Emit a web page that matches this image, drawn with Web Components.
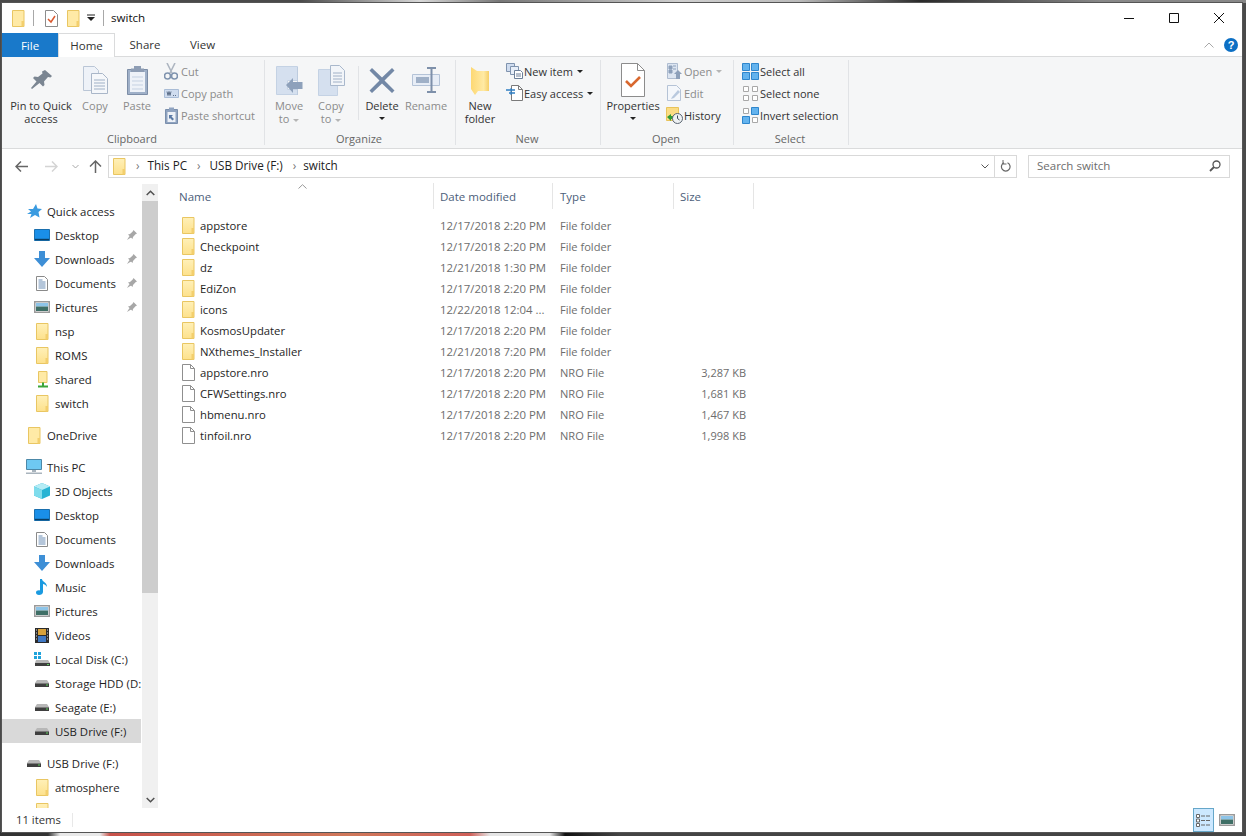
<!DOCTYPE html>
<html>
<head>
<meta charset="utf-8">
<title>switch</title>
<style>
  html, body { margin: 0; height: 100%; overflow: hidden; background: #444; }
  body { font: 12px "Open Sans", "Noto Sans", sans-serif; }
</style>
</head>
<body>
<explorer-window>
  <title-bar title-text="switch"></title-bar>
  <ribbon-tabs></ribbon-tabs>
  <ribbon-panel>
    <rb-group label="Clipboard" style="--w:262px;--pad:6px">
      <rb-large style="--w:66px"><win-icon name="pin" slot="icon"></win-icon>Pin to Quick<br>access</rb-large>
      <rb-large style="--w:42px" disabled><win-icon name="copy" slot="icon"></win-icon>Copy</rb-large>
      <rb-large style="--w:42px" disabled><win-icon name="paste" slot="icon"></win-icon>Paste</rb-large>
      <rb-stack style="--x:3px">
        <rb-small disabled><win-icon name="cut" slot="icon"></win-icon>Cut</rb-small>
        <rb-small disabled><win-icon name="copypath" slot="icon"></win-icon>Copy path</rb-small>
        <rb-small disabled><win-icon name="pasteshortcut" slot="icon"></win-icon>Paste shortcut</rb-small>
      </rb-stack>
    </rb-group>
    <rb-group label="Organize" style="--w:190px;--pad:2px">
      <rb-large style="--w:44px" disabled><win-icon name="moveto" slot="icon"></win-icon>Move<br>to <rb-caret></rb-caret></rb-large>
      <rb-large style="--w:40px" disabled><win-icon name="copyto" slot="icon"></win-icon>Copy<br>to <rb-caret></rb-caret></rb-large>
      <rb-sep></rb-sep>
      <rb-large style="--w:42px" arrow><win-icon name="delete" slot="icon"></win-icon>Delete</rb-large>
      <rb-large style="--w:44px;margin-left:1px" disabled><win-icon name="rename" slot="icon"></win-icon>Rename</rb-large>
    </rb-group>
    <rb-group label="New" style="--w:144px;--pad:0px">
      <rb-large style="--w:48px"><win-icon name="bigfolder" slot="icon"></win-icon>New<br>folder</rb-large>
      <rb-stack>
        <rb-small arrow><win-icon name="newitem" slot="icon"></win-icon>New item</rb-small>
        <rb-small arrow><win-icon name="easyaccess" slot="icon"></win-icon>Easy access</rb-small>
      </rb-stack>
    </rb-group>
    <rb-group label="Open" style="--w:132px;--pad:1px">
      <rb-large style="--w:62px" arrow><win-icon name="properties" slot="icon"></win-icon>Properties</rb-large>
      <rb-stack>
        <rb-small disabled arrow-light><win-icon name="open" slot="icon"></win-icon>Open</rb-small>
        <rb-small disabled><win-icon name="edit" slot="icon"></win-icon>Edit</rb-small>
        <rb-small><win-icon name="history" slot="icon"></win-icon>History</rb-small>
      </rb-stack>
    </rb-group>
    <rb-group label="Select" style="--w:114px;--pad:0px">
      <rb-stack style="--x:6px">
        <rb-small><win-icon name="selectall" slot="icon"></win-icon>Select all</rb-small>
        <rb-small><win-icon name="selectnone" slot="icon"></win-icon>Select none</rb-small>
        <rb-small><win-icon name="invert" slot="icon"></win-icon>Invert selection</rb-small>
      </rb-stack>
    </rb-group>
  </ribbon-panel>
  <address-bar></address-bar>
  <main-area>
    <nav-pane slot="nav">
      <nav-item top icon="star">Quick access</nav-item>
      <nav-item icon="desktop" pinned>Desktop</nav-item>
      <nav-item icon="downloads" pinned>Downloads</nav-item>
      <nav-item icon="documents" pinned>Documents</nav-item>
      <nav-item icon="pictures" pinned>Pictures</nav-item>
      <nav-item icon="folder">nsp</nav-item>
      <nav-item icon="folder">ROMS</nav-item>
      <nav-item icon="shared">shared</nav-item>
      <nav-item icon="folder">switch</nav-item>
      <nav-item top gap icon="navfolder">OneDrive</nav-item>
      <nav-item top gap icon="thispc">This PC</nav-item>
      <nav-item icon="objects">3D Objects</nav-item>
      <nav-item icon="desktop">Desktop</nav-item>
      <nav-item icon="documents">Documents</nav-item>
      <nav-item icon="downloads">Downloads</nav-item>
      <nav-item icon="music">Music</nav-item>
      <nav-item icon="pictures">Pictures</nav-item>
      <nav-item icon="videos">Videos</nav-item>
      <nav-item icon="localdisk">Local Disk (C:)</nav-item>
      <nav-item icon="drive">Storage HDD (D:)</nav-item>
      <nav-item icon="drive">Seagate (E:)</nav-item>
      <nav-item icon="drive" selected>USB Drive (F:)</nav-item>
      <nav-item top gap icon="drive">USB Drive (F:)</nav-item>
      <nav-item icon="folder">atmosphere</nav-item>
      <nav-item icon="folder">bootloader</nav-item>
    </nav-pane>
    <file-list slot="files">
      <file-row icon="folder" name="appstore" date="12/17/2018 2:20 PM" type="File folder"></file-row>
      <file-row icon="folder" name="Checkpoint" date="12/17/2018 2:20 PM" type="File folder"></file-row>
      <file-row icon="folder" name="dz" date="12/21/2018 1:30 PM" type="File folder"></file-row>
      <file-row icon="folder" name="EdiZon" date="12/17/2018 2:20 PM" type="File folder"></file-row>
      <file-row icon="folder" name="icons" date="12/22/2018 12:04 ..." type="File folder"></file-row>
      <file-row icon="folder" name="KosmosUpdater" date="12/17/2018 2:20 PM" type="File folder"></file-row>
      <file-row icon="folder" name="NXthemes_Installer" date="12/21/2018 7:20 PM" type="File folder"></file-row>
      <file-row icon="file" name="appstore.nro" date="12/17/2018 2:20 PM" type="NRO File" size="3,287 KB"></file-row>
      <file-row icon="file" name="CFWSettings.nro" date="12/17/2018 2:20 PM" type="NRO File" size="1,681 KB"></file-row>
      <file-row icon="file" name="hbmenu.nro" date="12/17/2018 2:20 PM" type="NRO File" size="1,467 KB"></file-row>
      <file-row icon="file" name="tinfoil.nro" date="12/17/2018 2:20 PM" type="NRO File" size="1,998 KB"></file-row>
    </file-list>
  </main-area>
  <status-bar>11 items</status-bar>
</explorer-window>

<script>
// every icon is drawn in its own pixel box, the first two numbers are the size
const ICONS = {
  folder: [13, 17, `<defs><linearGradient id="f" x1="0" y1="0" x2="0" y2="1"><stop offset="0" stop-color="#fff0b8"/><stop offset="1" stop-color="#fde18c"/></linearGradient></defs>
    <path d="M.5.5h11.5v16H.5z" fill="url(#f)" stroke="#e9c662"/><path d="M12 11v5.500H9.500V11z" fill="#f3cf6d"/>`],
  navfolder: [13, 17, `<path d="M.5.5h11.5v16H.5z" fill="#ffeaa6" stroke="#e9c662"/><path d="M12 11v5.500H9.500V11z" fill="#f3cf6d"/>`],
  check16: [13, 17, `<path d="M.5.5h8l4 4v12H.5z" fill="#fff" stroke="#8c8c8c"/><path d="M3 9l3 3 4-6" fill="none" stroke="#d9582e" stroke-width="1.500"/>`],
  file: [13, 17, `<path d="M.5.5h8l4 4v12H.5z" fill="#fff" stroke="#8f8f8f"/><path d="M8.5.5v4h4" fill="none" stroke="#8f8f8f"/>`],
  pin: [21, 20, `<path d="M14 0l7 6-1.500 1.500-2.500-.5-4 4.500.5 3.500-1.500 1.500-3.500-3.500L1 19l-1-1 5.500-6.500L2 8l1.500-1.500 3.500.5 4.500-3.500L11 1.500z" fill="#7b8692"/>`],
  copy: [25, 28, `<path d="M.5.5h11l4 4v20H.5z" fill="#eef2f8" stroke="#bac6d6"/><path d="M8.500 7.500h11l5 5v15h-16z" fill="#f5f7fa" stroke="#a9b6c8"/><path d="M11 14h11M11 17h11M11 20h11M11 23h11" stroke="#9fb0c6"/>`],
  paste: [21, 29, `<path d="M.5 3.500h20v25H.5z" fill="#9fb0c8" stroke="#7c8da6"/><path d="M3 6h15v20H3z" fill="#eef2f8"/><path d="M7 0h7v2.500h3V6H4V2.500h3z" fill="#8e9db4"/><path d="M5 11h11M5 15h11M5 19h11M5 23h11" stroke="#c5d1e2"/>`],
  cut: [14, 17, `<path d="M3 0l5 10M11 0L6 10" stroke="#aeb6c1" stroke-width="1.600" fill="none"/><circle cx="3.500" cy="13" r="3" fill="none" stroke="#7f93ae" stroke-width="1.600"/><circle cx="10.500" cy="13" r="3" fill="none" stroke="#7f93ae" stroke-width="1.600"/>`],
  copypath: [15, 9, `<path d="M.5.5h14v8H.5z" fill="#cfdcef" stroke="#a9bcd6"/><path d="M3 2.500l1 4 1-4 1 4 1-4M9 6.500h1M11 6.500h1" stroke="#5e708a" fill="none"/>`],
  pasteshortcut: [13, 17, `<path d="M.5 2.500h12v14H.5z" fill="#8fa3c0" stroke="#7a8fac"/><path d="M2.500 5h8v10h-8z" fill="#edf1f7"/><path d="M4 .5h5v2.500H4z" fill="#8fa3c0"/><path d="M4 12V8h4l-1.500 1.500L9 12l-1.500 1.500L5 11z" fill="#5b7ba6"/>`],
  moveto: [27, 29, `<path d="M.5.5h21v14h-10v9h10v5H.5z" fill="#d5e0ef" stroke="#c4d2e4"/><path d="M21.500 1v28" stroke="#bccbde"/><path d="M10 17l7-7v4h9.500v7H17v4z" fill="#8ea1bb" transform="translate(0 2)"/>`],
  copyto: [27, 31, `<path d="M.5 4.500h19v26H.5z" fill="#d5e0ef" stroke="#c4d2e4"/><path d="M12.500.5h9l5 5v15h-14z" fill="#f2f5f9" stroke="#a9b8cc"/><path d="M15 8h9M15 11h9M15 14h9M15 17h9" stroke="#a0b0c6"/>`],
  delete: [26, 25, `<path d="M3 0l10 9.500L23 0l2.500 2.500-10 10 10 10L23 25 13 15.500 3 25 .5 22.500l10-10-10-10z" fill="#7388a6"/>`],
  rename: [28, 26, `<path d="M.5 7.500h27v11H.5z" fill="#e7edf6" stroke="#b4c3d7"/><path d="M4 10h13v6H4z" fill="#9fb0c7"/><path d="M15 1h9M15 25h9M19.500 1v24" stroke="#7e90aa" stroke-width="2" fill="none"/>`],
  bigfolder: [20, 29, `<defs><linearGradient id="g" x1="0" y1="0" x2="1" y2="0"><stop offset="0" stop-color="#fdd873"/><stop offset=".7" stop-color="#ffeaa4"/><stop offset="1" stop-color="#f6cf68"/></linearGradient></defs><path d="M1 1l6 4h12v20H8l-3 4-4-6z" fill="url(#g)"/>`],
  newitem: [17, 16, `<path d="M.5.5h8v8h-8z" fill="#cfdcef" stroke="#7f93ae"/><path d="M4.500 3.500h8v8h-8z" fill="#e7eef8" stroke="#7f93ae"/><path d="M8.500 7.500h6l2 2v6h-8z" fill="#fff" stroke="#6c7f99"/><path d="M10 11h5M10 13h5" stroke="#6c7f99"/>`],
  easyaccess: [17, 16, `<path d="M5.500.5h7l4 4v11h-11z" fill="#fff" stroke="#7a7a7a"/><path d="M12.500.5v4h4" fill="none" stroke="#7a7a7a"/><path d="M0 5h9M3 8h6" stroke="#2f7fc4" stroke-width="1.400"/><path d="M5 3v7" stroke="#2f7fc4"/>`],
  properties: [26, 36, `<path d="M1.500 1.500h16l7 7v26h-23z" fill="#fff" stroke="#8c8c8c"/><path d="M17.500 1.500v7h7" fill="none" stroke="#8c8c8c"/><path d="M6 19l5 5 9-9" fill="none" stroke="#d9682e" stroke-width="2.600"/>`],
  open: [15, 16, `<path d="M.5.5h10v15H.5z" fill="#dce5f1" stroke="#aebcd0"/><path d="M2 3h3v3H2zM2 7h3v3H2zM6 3h3M6 6h3" fill="#8da0ba" stroke="#8da0ba"/><path d="M11 7l4 4h-2v5h-4v-5H7z" fill="#8da0ba"/>`],
  edit: [16, 16, `<path d="M1.500.5h9l4 4v11h-13z" fill="#f4f7fb" stroke="#b5c3d6"/><path d="M6 12l6-7 2 2-6 6-3 1z" fill="#b9c9de"/>`],
  history: [17, 17, `<path d="M.5.5h12v13H.5z" fill="#fbdc84" stroke="#e8c35a"/><path d="M1 10l4-3v2h3v3H5v2z" fill="#2f9b32"/><circle cx="11.500" cy="11.500" r="5" fill="#eef1f3" stroke="#5a6470"/><path d="M11.500 8.500v3l2 1.500" stroke="#3f4a55" fill="none"/>`],
  selectall: [17, 17, `<path d="M.5.5h7v7h-7zM9.500.5h7v7h-7zM.5 9.500h7v7h-7zM9.500 9.500h7v7h-7z" fill="#63b3ee" stroke="#2f86cc"/>`],
  selectnone: [17, 17, `<path d="M1.500 1.500h5v5h-5zM10.500 1.500h5v5h-5zM1.500 10.500h5v5h-5zM10.500 10.500h5v5h-5z" fill="#fff" stroke="#a8a8a8"/>`],
  invert: [17, 17, `<path d="M.5 9.500h7v7h-7zM9.500.5h7v7h-7z" fill="#63b3ee" stroke="#2f86cc"/><path d="M1.500 1.500h5v5h-5zM10.500 10.500h5v5h-5z" fill="#fff" stroke="#a8a8a8"/>`],
  star: [15, 14, `<path d="M9 0l1.500 4.500L15 5l-3.500 3 1 5.500L8 11l-5 3 1.500-4H0l4-2.500L1 5h5z" fill="#3a9be0"/>`],
  desktop: [16, 12, `<path d="M.5.5h15v11H.5z" fill="#1a8fe8" stroke="#1a6fae"/><path d="M1 10.500h14" stroke="#0a3d63" stroke-width="1.400"/>`],
  downloads: [16, 16, `<path d="M5 0h6v7h5l-8 9-8-9h5z" fill="#3e8fd6"/>`],
  documents: [12, 15, `<path d="M.5.5h8l3 3v11H.5z" fill="#fff" stroke="#8a8a8a"/><path d="M2.500 4h4M2.500 6h7M2.500 8h7M2.500 10h7M2.500 12h7" stroke="#6b8db5"/>`],
  pictures: [16, 12, `<path d="M.75.75h14.500v10.500H.75z" fill="#fff" stroke="#9a9a9a" stroke-width="1.500"/><path d="M2 2h12v3.500H2z" fill="#8dc4e8"/><path d="M2 5.500h12V10H2z" fill="#3f6f66"/>`],
  shared: [13, 17, `<path d="M2.500.5h8.500v11H2.500z" fill="#ffeaa6" stroke="#e9c662"/><path d="M6 11.500h2v3H6zM2 14.500h10v2H2z" fill="#3aa53a"/>`],
  thispc: [16, 16, `<path d="M.5.5h15v10H.5z" fill="#6ec8f2" stroke="#4c88a8"/><path d="M6 11h4v2H6zM0 13.500h16V15H0z" fill="#a9b4bd"/>`],
  objects: [16, 16, `<path d="M8 0l8 3.500v9L8 16l-8-3.500v-9z" fill="#26b3d3"/><path d="M8 0l8 3.500L8 7 0 3.500z" fill="#b5ecf5"/><path d="M0 3.500L8 7v9l-8-3.500z" fill="#7fdcec"/>`],
  music: [12, 16, `<path d="M4 0h2c0 3 5 3 5 8-1-2-3-3-4-3v8c0 2-2 3-4 3s-3-1-3-2.500S2 11 4 11.500z" fill="#1a9ae0"/>`],
  videos: [14, 15, `<path d="M0 0h14v15H0z" fill="#2b2b2b"/><path d="M3 1h8v6H3z" fill="#d7a13b"/><path d="M3 8h8v6H3z" fill="#3f78c4"/><path d="M1 2h1M1 5h1M1 8h1M1 11h1M12 2h1M12 5h1M12 8h1M12 11h1" stroke="#ddd"/>`],
  localdisk: [16, 14, `<path d="M0 0h3v3H0zM4 0h3v3H4zM0 4h3v3H0zM4 4h3v3H4z" fill="#1fa3dc"/><path d="M2 8h12l2 3v3H1v-3z" fill="#b7b7b7"/><path d="M1 11h15v3H1z" fill="#3f3f3f"/><path d="M13 12h2v1h-2z" fill="#5fd35f"/>`],
  drive: [14, 7, `<path d="M2 0h10l2 3v4H0V3z" fill="#b7b7b7"/><path d="M0 3.500h14V7H0z" fill="#3f3f3f"/><path d="M11 4.500h2v1h-2z" fill="#5fd35f"/>`],
  navpin: [10, 10, `<path d="M6.500 0L10 3.500 8.500 4.300 6 7l-.5 2L1 4.500 3 4l2.700-2.500zM2.500 6L0 10l4-2.500z" fill="#a7a7a7"/>`],
};

class WinIcon extends HTMLElement {
  connectedCallback() {
    const [w, h, body] = ICONS[this.getAttribute("name")];
    this.attachShadow({mode: "open"}).innerHTML = `
      <style>:host { display: inline-flex; flex: none; } svg { display: block; }</style>
      <svg width="${w}" height="${h}" viewBox="0 0 ${w} ${h}">${body}</svg>`;
  }
}

class ExplorerWindow extends HTMLElement {
  constructor() {
    super();
    this.attachShadow({mode: "open"}).innerHTML = `
      <style>
        :host {
          display: block; width: 1246px; height: 836px; box-sizing: border-box;
          padding: 3px 4px 4px 2px;
          background:
            linear-gradient(90deg, #333 0, #333 48px, #e9e9e9 60px, #e9e9e9 100px, #c8524a 110px, #d0785a 350px, #cf5f58 470px, #e5e5e5 490px, #e5e5e5 550px, #111 565px, #444 620px) 0 100% / 100% 4px no-repeat,
            linear-gradient(90deg, #4a4a4a 0, #4a4a4a 300px, #d8d8d8 420px, #777 500px, #cfcfcf 680px, #bbb 800px, #2a2a2a 920px, #888 1100px, #888 100%) 0 0 / 100% 3px no-repeat,
            #4a4a4a;
        }
        .frame {
          height: 100%; box-sizing: border-box; background: #fff;
          outline: 1px solid #555; display: flex; flex-direction: column; overflow: hidden;
          color: #1e1e1e;
        }
      </style>
      <div class="frame"><slot></slot></div>`;
  }
}

class TitleBar extends HTMLElement {
  constructor() {
    super();
    this.attachShadow({mode: "open"}).innerHTML = `
      <style>
        :host { display: flex; align-items: center; height: 30px; flex: none; padding-left: 10px; font-size: 11.6px; color: #111; }
        .sep { width: 1px; height: 16px; background: #a8a8a8; flex: none; }
        .drop { margin: 0 8px 0 7px; display: block; }
        .name { padding-bottom: 1px; }
        .ctl { margin-left: auto; display: flex; align-items: center; gap: 35px; padding-right: 18px; }
        svg { display: block; }
      </style>
      <win-icon name="navfolder"></win-icon>
      <span class="sep" style="margin:0 8px"></span>
      <win-icon name="check16" style="margin:0 9px 0 3px"></win-icon>
      <win-icon name="navfolder"></win-icon>
      <svg class="drop" width="8" height="8" viewBox="0 0 8 8"><path d="M0 1h8" stroke="#222"/><path d="M0 3h8L4 7z" fill="#222"/></svg>
      <span class="sep" style="margin-right:7px"></span>
      <span class="name"></span>
      <span class="ctl">
        <svg width="10" height="10" viewBox="0 0 10 10"><path d="M0 5.500h10" stroke="#111"/></svg>
        <svg width="10" height="10" viewBox="0 0 10 10"><path d="M.5.5h9v9h-9z" fill="none" stroke="#111"/></svg>
        <svg width="10" height="10" viewBox="0 0 10 10"><path d="M0 0l10 10M10 0L0 10" stroke="#111"/></svg>
      </span>`;
  }
  connectedCallback() {
    this.shadowRoot.querySelector(".name").textContent = this.getAttribute("title-text");
  }
}

class RibbonTabs extends HTMLElement {
  constructor() {
    super();
    this.attachShadow({mode: "open"}).innerHTML = `
      <style>
        :host { display: flex; height: 24px; flex: none; font-size: 11.5px; color: #333; align-items: stretch; position: relative; box-sizing: border-box; border-bottom: 1px solid #dadbdc; }
        div { display: flex; align-items: center; justify-content: center; }
        .file { width: 56px; background: #1979ca; color: #fff; margin-bottom: -1px; }
        .home { width: 57px; background: #fff; border: 1px solid #dadbdc; border-bottom: 0; margin-bottom: -1px; z-index: 1; box-sizing: border-box; }
        .share { width: 60px; }
        .view { width: 55px; }
        .right { margin-left: auto; gap: 10px; padding-right: 4px; }
        svg { display: block; }
        .help { width: 14px; height: 14px; border-radius: 50%; background: #0c6fc4; color: #fff; font: bold 11px "Liberation Sans", sans-serif; display: flex; align-items: center; justify-content: center; }
      </style>
      <div class="file">File</div><div class="home">Home</div><div class="share">Share</div><div class="view">View</div>
      <div class="right">
        <svg width="10" height="6" viewBox="0 0 10 6"><path d="M.5 5.500L5 1l4.500 4.500" fill="none" stroke="#a8a8a8"/></svg>
        <span class="help">?</span>
      </div>`;
  }
}

class RibbonPanel extends HTMLElement {
  constructor() {
    super();
    this.attachShadow({mode: "open"}).innerHTML = `
      <style>
        :host { display: flex; flex: none; height: 91px; background: #f5f6f7; border-bottom: 1px solid #dadbdc; }
      </style>
      <slot></slot>`;
  }
}

class RbGroup extends HTMLElement {
  constructor() {
    super();
    this.attachShadow({mode: "open"}).innerHTML = `
      <style>
        :host { display: flex; flex-direction: column; flex: none; width: var(--w); box-sizing: border-box; margin-right: 1px; position: relative; padding-left: var(--pad, 0); }
        :host::after { content: ""; position: absolute; right: -1px; top: 3px; bottom: 3px; width: 1px; background: #e1e3e6; }
        .body { display: flex; flex: 1; min-height: 0; padding-top: 4px; }
        .label { margin: 0 2px 0 calc(-1 * var(--pad, 0px)); text-align: center; font-size: 11px; color: #666; height: 19px; line-height: 19px; }
      </style>
      <div class="body"><slot></slot></div>
      <div class="label"></div>`;
  }
  connectedCallback() {
    this.shadowRoot.querySelector(".label").textContent = this.getAttribute("label");
  }
}

class RbLarge extends HTMLElement {
  constructor() {
    super();
    this.attachShadow({mode: "open"}).innerHTML = `
      <style>
        :host { display: flex; flex-direction: column; align-items: center; flex: none; width: var(--w); font-size: 11px; line-height: 13px; color: #333; text-align: center; white-space: nowrap; }
        :host([disabled]) { color: #8b8b8b; }
        .ic { height: 36px; display: flex; align-items: center; justify-content: center; margin-top: 1px; margin-bottom: 1px; }
        .arrow { display: none; width: 0; height: 0; border: 3px solid transparent; border-top: 3px solid #222; border-bottom: 0; margin-top: 5px; }
        :host([arrow]) .arrow { display: block; }
      </style>
      <div class="ic"><slot name="icon"></slot></div>
      <div><slot></slot></div>
      <span class="arrow"></span>`;
  }
}

class RbCaret extends HTMLElement {
  constructor() {
    super();
    this.attachShadow({mode: "open"}).innerHTML = `
      <style>
        :host { display: inline-block; width: 0; height: 0; border: 3px solid transparent; border-top: 3px solid #b5b5b5; border-bottom: 0; vertical-align: middle; margin-left: 1px; }
      </style>`;
  }
}

class RbSep extends HTMLElement {
  constructor() {
    super();
    this.attachShadow({mode: "open"}).innerHTML = `
      <style>
        :host { display: block; flex: none; width: 1px; height: 54px; margin: 5px 2px 0 7px; background: #e1e3e6; }
      </style>`;
  }
}

class RbStack extends HTMLElement {
  constructor() {
    super();
    this.attachShadow({mode: "open"}).innerHTML = `
      <style>
        :host { display: flex; flex-direction: column; flex: none; margin-left: var(--x, 0); margin-top: -1px; }
      </style>
      <slot></slot>`;
  }
}

class RbSmall extends HTMLElement {
  constructor() {
    super();
    this.attachShadow({mode: "open"}).innerHTML = `
      <style>
        :host { display: flex; align-items: center; height: 22px; font-size: 11px; color: #333; white-space: nowrap; }
        :host([disabled]) { color: #8b8b8b; }
        .ic { width: 20px; display: flex; justify-content: center; flex: none; }
        .arrow { display: none; width: 0; height: 0; border: 3px solid transparent; border-top: 3px solid #222; border-bottom: 0; margin-left: 4px; }
        :host([arrow]) .arrow { display: block; }
        :host([arrow-light]) .arrow { display: block; border-top-color: #b5b5b5; }
      </style>
      <span class="ic"><slot name="icon"></slot></span><span><slot></slot></span><span class="arrow"></span>`;
  }
}

class AddressBar extends HTMLElement {
  constructor() {
    super();
    this.attachShadow({mode: "open"}).innerHTML = `
      <style>
        :host { display: flex; align-items: center; height: 34px; flex: none; font-size: 11.7px; color: #222; padding-left: 13px; box-sizing: border-box; }
        svg { display: block; flex: none; }
        .nav { display: flex; align-items: center; width: 93px; flex: none; }
        .box { height: 23px; box-sizing: border-box; border: 1px solid #d9d9d9; display: flex; align-items: center; }
        .txt { padding-bottom: 2px; }
        .crumbs { width: 909px; padding-left: 4px; flex: none; }
        .sep { margin: 0 9px 0 10px; color: #777; padding-bottom: 2px; }
        .end { margin-left: auto; display: flex; align-items: center; height: 100%; }
        .refresh { border-left: 1px solid #d9d9d9; height: 100%; display: flex; align-items: center; padding: 0 5px; margin-left: 5px; }
        .search { width: 202px; margin-left: 11px; padding: 0 8px; color: #6d6d6d; justify-content: space-between; flex: none; font-size: 11.5px; }
      </style>
      <div class="nav">
        <svg width="13" height="11" viewBox="0 0 13 11"><path d="M6 .5L1 5.500l5 5M1 5.500h12" fill="none" stroke="#666" stroke-width="1.500"/></svg>
        <svg width="13" height="11" viewBox="0 0 13 11" style="margin-left:17px"><path d="M7 .5l5 5-5 5M12 5.500H0" fill="none" stroke="#d4d4d4" stroke-width="1.500"/></svg>
        <svg width="7" height="5" viewBox="0 0 7 5" style="margin-left:14px"><path d="M.5 1l3 3 3-3" fill="none" stroke="#a8a8a8"/></svg>
        <svg width="13" height="13" viewBox="0 0 13 13" style="margin-left:10px"><path d="M1 6.500l5.500-5.500 5.500 5.500M6.500 1v12" fill="none" stroke="#666" stroke-width="1.500"/></svg>
      </div>
      <div class="box crumbs">
        <win-icon name="folder"></win-icon>
        <span class="sep" style="margin-right:8px">›</span><span class="txt">This PC</span>
        <span class="sep">›</span><span class="txt">USB Drive (F:)</span>
        <span class="sep" style="margin-right:7px">›</span><span class="txt">switch</span>
        <span class="end">
          <svg width="8" height="5" viewBox="0 0 8 5"><path d="M.5.5L4 4 7.500.5" fill="none" stroke="#555"/></svg>
          <span class="refresh"><svg width="11" height="12" viewBox="0 0 11 12"><path d="M4 2.800a4.300 4.300 0 1 0 3.500 0" fill="none" stroke="#666" stroke-width="1.200"/><path d="M3 0v4h3.500" fill="none" stroke="#666"/></svg></span>
        </span>
      </div>
      <div class="box search">
        <span class="txt">Search switch</span>
        <svg width="12" height="12" viewBox="0 0 12 12"><circle cx="7.500" cy="4.500" r="3.500" fill="none" stroke="#555" stroke-width="1.300"/><path d="M5 7l-4 4" stroke="#555" stroke-width="1.800"/></svg>
      </div>`;
  }
}

class MainArea extends HTMLElement {
  constructor() {
    super();
    this.attachShadow({mode: "open"}).innerHTML = `
      <style>
        :host { display: flex; flex: 1; min-height: 0; }
      </style>
      <slot name="nav"></slot><slot name="files"></slot>`;
  }
}

class NavPane extends HTMLElement {
  constructor() {
    super();
    this.attachShadow({mode: "open"}).innerHTML = `
      <style>
        :host { display: flex; width: 156px; flex: none; height: 100%; position: relative; overflow: hidden; }
        .list { width: 139px; flex: none; padding-top: 16px; overflow: hidden; }
        .bar { width: 16px; margin: 1px 0 0 1px; flex: none; background: #f0f0f0; display: flex; flex-direction: column; align-items: center; }
        .btn { height: 17px; flex: none; display: flex; align-items: center; justify-content: center; }
        .thumb { width: 100%; height: 392px; background: #cdcdcd; flex: none; }
        .sp { flex: 1; }
        svg { display: block; }
      </style>
      <div class="list"><slot></slot></div>
      <div class="bar">
        <div class="btn"><svg width="9" height="6" viewBox="0 0 9 6"><path d="M.7 5L4.500 1.200 8.300 5" fill="none" stroke="#505050" stroke-width="1.500"/></svg></div>
        <div class="thumb"></div><div class="sp"></div>
        <div class="btn"><svg width="9" height="6" viewBox="0 0 9 6"><path d="M.7 1l3.800 3.800L8.300 1" fill="none" stroke="#505050" stroke-width="1.500"/></svg></div>
      </div>`;
  }
}

class NavItem extends HTMLElement {
  connectedCallback() {
    const pin = this.hasAttribute("pinned") ? '<win-icon name="navpin" class="pin"></win-icon>' : "";
    this.attachShadow({mode: "open"}).innerHTML = `
      <style>
        :host { display: flex; align-items: center; height: 24px; font-size: 11.4px; color: #1e1e1e; white-space: nowrap; position: relative; overflow: hidden; }
        :host([gap]) { margin-top: 8px; }
        :host([selected]) { background: #d9d9d9; }
        .ic { width: 16px; margin-left: 32px; margin-right: 5px; display: flex; justify-content: center; flex: none; }
        :host([top]) .ic { margin-left: 24px; }
        .pin { position: absolute; left: 125px; top: 7px; }
      </style>
      <span class="ic"><win-icon name="${this.getAttribute("icon")}"></win-icon></span>
      <span><slot></slot></span>${pin}`;
  }
}

class FileList extends HTMLElement {
  constructor() {
    super();
    this.attachShadow({mode: "open"}).innerHTML = `
      <style>
        :host { display: block; flex: 1; min-width: 0; position: relative; padding-left: 14px; }
        .head { display: grid; grid-template-columns: 262px 119px 121px 80px; width: max-content; height: 26px; font-size: 11.5px; color: #4c607a; position: relative; margin-bottom: 6px; }
        .head span { border-right: 1px solid #e5e5e5; padding-left: 6px; display: flex; align-items: center; box-sizing: border-box; }
        .head span.wide { padding-left: 7px; }
        .sort { position: absolute; left: 126px; top: 1px; }
        svg { display: block; }
      </style>
      <div class="head">
        <span class="wide">Name</span><span>Date modified</span><span class="wide">Type</span><span>Size</span>
        <svg class="sort" width="9" height="5" viewBox="0 0 9 5"><path d="M.5 4.500L4.500.7l4 3.800" fill="none" stroke="#999"/></svg>
      </div>
      <slot></slot>`;
  }
}

class FileRow extends HTMLElement {
  connectedCallback() {
    const a = n => this.getAttribute(n) || "";
    this.attachShadow({mode: "open"}).innerHTML = `
      <style>
        :host { display: grid; grid-template-columns: 262px 119px 121px 72px; height: 21px; align-items: center; font-size: 11.1px; color: #6d6d6d; white-space: nowrap; }
        .n { display: flex; align-items: center; gap: 5px; color: #1e1e1e; padding-left: 10px; font-size: 11.3px; }
        .d { padding-left: 6px; font-size: 11.4px; }
        .t { padding-left: 7px; }
        .s { text-align: right; font-size: 11px; }
      </style>
      <span class="n"><win-icon name="${a("icon")}"></win-icon><span>${a("name")}</span></span>
      <span class="d">${a("date")}</span><span class="t">${a("type")}</span><span class="s">${a("size")}</span>`;
  }
}

class StatusBar extends HTMLElement {
  constructor() {
    super();
    this.attachShadow({mode: "open"}).innerHTML = `
      <style>
        :host { display: flex; align-items: center; height: 24px; flex: none; font-size: 11.3px; color: #333; padding-left: 14px; background: #fff; }
        .txt { padding-bottom: 2px; }
        .sep { width: 1px; height: 14px; background: #e8e8e8; margin-left: 11px; }
        .views { margin-left: auto; display: flex; align-items: center; height: 100%; margin-right: 7px; gap: 5px; }
        .on { width: 21px; height: 100%; box-sizing: border-box; background: #cce8ff; border: 1px solid #66a7c9; display: flex; align-items: center; justify-content: center; }
        svg { display: block; }
      </style>
      <span class="txt"><slot></slot></span><span class="sep"></span>
      <span class="views">
        <span class="on"><svg width="15" height="15" viewBox="0 0 15 15"><path d="M.5 1.500h3v3h-3zM.5 6h3v3h-3zM.5 10.500h3v3h-3z" fill="#fff" stroke="#666"/><path d="M5 3h4M10 3h4M5 7.500h4M10 7.500h4M5 12h4M10 12h4" stroke="#666"/></svg></span>
        <win-icon name="pictures"></win-icon>
      </span>`;
  }
}

customElements.define("win-icon", WinIcon);
customElements.define("explorer-window", ExplorerWindow);
customElements.define("title-bar", TitleBar);
customElements.define("ribbon-tabs", RibbonTabs);
customElements.define("ribbon-panel", RibbonPanel);
customElements.define("rb-group", RbGroup);
customElements.define("rb-large", RbLarge);
customElements.define("rb-caret", RbCaret);
customElements.define("rb-sep", RbSep);
customElements.define("rb-stack", RbStack);
customElements.define("rb-small", RbSmall);
customElements.define("address-bar", AddressBar);
customElements.define("main-area", MainArea);
customElements.define("nav-pane", NavPane);
customElements.define("nav-item", NavItem);
customElements.define("file-list", FileList);
customElements.define("file-row", FileRow);
customElements.define("status-bar", StatusBar);
</script>
</body>
</html>
